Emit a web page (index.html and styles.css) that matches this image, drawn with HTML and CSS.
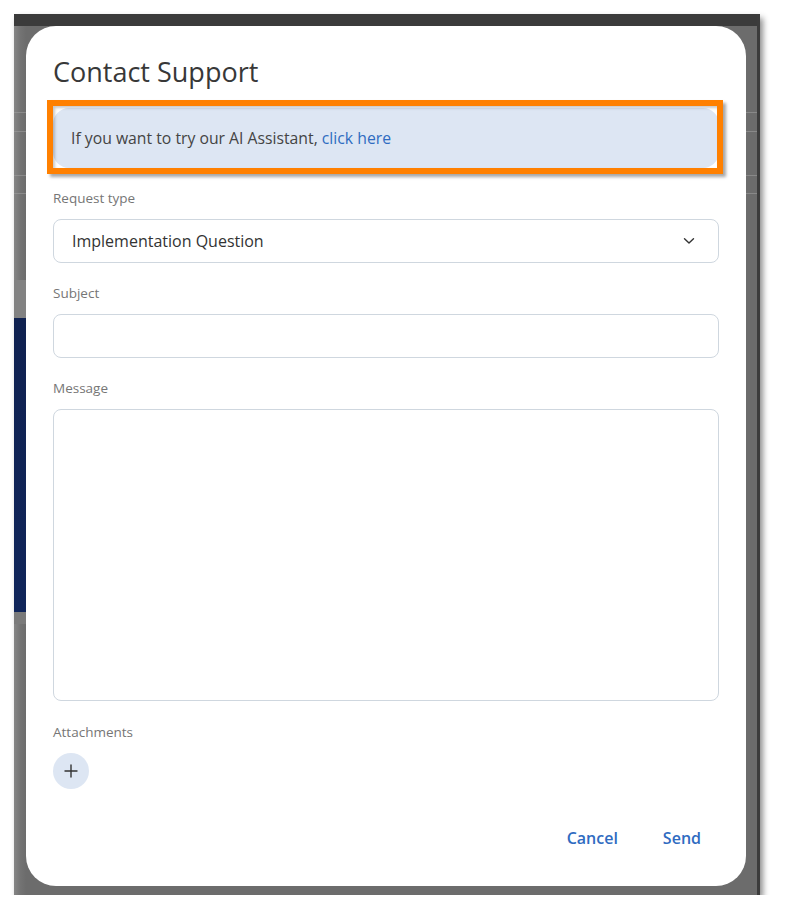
FILE: index.html
```html
<!DOCTYPE html>
<html lang="en">
<head>
<meta charset="utf-8">
<title>Contact Support</title>
<link rel="stylesheet" href="styles.css">
</head>
<body>
<div class="frame">
  <div class="topbar"></div>
  <div class="stage">
    <div class="dialog">
      <h1 class="title">Contact Support</h1>
      <div class="alert-wrap">
        <div class="alert">If you want to try our AI Assistant,&nbsp;<a class="link" href="#">click here</a></div>
        <div class="highlight"></div>
      </div>
      <div class="field">
        <div class="label">Request type</div>
        <div class="control select">
          <span class="value">Implementation Question</span>
          <svg class="chevron" width="12" height="8" viewBox="0 0 12 8"><path d="M1.5 1.8 L6 6 L10.5 1.8" fill="none" stroke="#333" stroke-width="1.4" stroke-linecap="round" stroke-linejoin="round"/></svg>
        </div>
      </div>
      <div class="field">
        <div class="label">Subject</div>
        <div class="control input"></div>
      </div>
      <div class="field">
        <div class="label">Message</div>
        <div class="control textarea"></div>
      </div>
      <div class="field field-attach">
        <div class="label">Attachments</div>
        <button class="add" type="button" aria-label="Add attachment">
          <svg width="14" height="14" viewBox="0 0 14 14"><path d="M7 1 V13 M1 7 H13" stroke="#333" stroke-width="1.4" stroke-linecap="round"/></svg>
        </button>
      </div>
      <div class="actions">
        <button class="btn" type="button">Cancel</button>
        <button class="btn" type="button">Send</button>
      </div>
    </div>
  </div>
</div>
</body>
</html>
```
FILE: styles.css
```css
* { box-sizing: border-box; }
html, body { margin: 0; padding: 0; background: #ffffff; }
body { font-family: "Open Sans", "Noto Sans", sans-serif; }

.frame {
  margin: 14px 0 0 14px;
  width: 746px;
  border-right: 3px solid #3c3c3c;
  box-shadow: 3px 4px 6px rgba(0,0,0,0.45);
  background:
    linear-gradient(to bottom, transparent 98px, rgba(160,160,160,0.55) 98px, rgba(160,160,160,0.55) 99px, transparent 99px,
      transparent 117px, rgba(160,160,160,0.55) 117px, rgba(160,160,160,0.55) 118px, transparent 118px,
      transparent 161px, rgba(160,160,160,0.55) 161px, rgba(160,160,160,0.55) 162px, transparent 162px,
      transparent 179px, rgba(160,160,160,0.55) 179px, rgba(160,160,160,0.55) 180px, transparent 180px),
    linear-gradient(to right, #858585 0, #747474 6px, #6c6c6c 12px, #6c6c6c 100%);
}
.topbar { height: 12px; background: #3b3b3b; }

.stage {
  padding: 0 11px 9px 12px;
  background:
    linear-gradient(to bottom, transparent 0, transparent 254px, #828282 254px, #828282 292px,
      #0f2150 292px, #10255a 586px, #7a7a7a 586px, #7a7a7a 598px, transparent 598px) left top / 12px 100% no-repeat;
}

.dialog {
  width: 720px;
  height: 860px;
  background: #ffffff;
  border-radius: 30px;
  padding: 28px 29px 30px 27px;
  display: flex;
  flex-direction: column;
}

.title {
  margin: 0;
  font-size: 27px;
  line-height: 36px;
  font-weight: 400;
  color: #383838;
}

.alert-wrap { position: relative; margin-top: 18px; margin-right: -2px; }
.alert {
  height: 60px;
  border-radius: 16px;
  background: #dde6f3;
  padding: 0 18px;
  display: flex;
  align-items: center;
  font-size: 15.75px;
  color: #444444;
}
.link { color: #2f6cc1; text-decoration: none; }
.highlight {
  position: absolute;
  left: -6px; top: -8px; right: -4px; bottom: -6px;
  border: 6px solid #ff8000;
  box-shadow: 3px 3px 3px rgba(0,0,0,0.35), inset 2px 2px 3px rgba(0,0,0,0.22);
}

.field { margin-top: 20px; margin-right: -2px; display: flex; flex-direction: column; align-items: flex-start; }
.field-attach { margin-top: 21px; }
.label { font-size: 13.5px; line-height: 20px; color: #767676; margin-bottom: 11px; }
.control {
  width: 100%;
  border: 1px solid #cfd7df;
  border-radius: 8px;
  background: #fff;
}
.select, .input { height: 44px; }
.select {
  display: flex;
  align-items: center;
  justify-content: space-between;
  padding: 0 23px 0 18px;
}
.value { font-size: 16px; color: #333333; }
.textarea { height: 292px; }

.add {
  width: 36px; height: 36px;
  border-radius: 50%;
  border: none;
  background: #dde6f3;
  display: flex; align-items: center; justify-content: center;
  padding: 0;
}

.actions {
  margin-top: auto;
  display: flex;
  justify-content: flex-end;
  gap: 13px;
}
.btn {
  font-family: "Open Sans", "Noto Sans", sans-serif;
  font-size: 16px;
  font-weight: 600;
  color: #2f6bc1;
  background: none;
  border: none;
  height: 36px;
  padding: 0 16px;
}
```
